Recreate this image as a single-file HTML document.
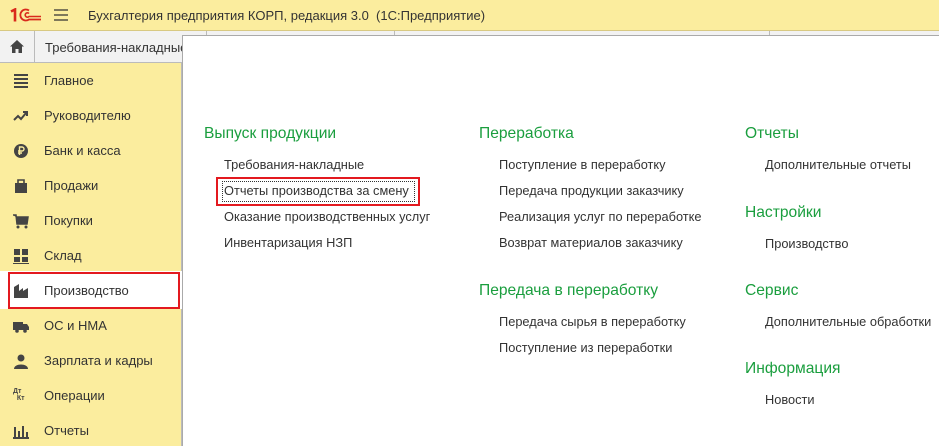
<!DOCTYPE html>
<html><head><meta charset="utf-8"><style>
*{margin:0;padding:0;box-sizing:border-box}
body{width:939px;height:446px;overflow:hidden;position:relative;font-family:"Liberation Sans",Arial,sans-serif;background:#fbed9e;color:#333}
.a{position:absolute;white-space:nowrap}
.top{left:0;top:0;width:939px;height:31px;background:#fbed9e;border-bottom:1px solid #d8c982}
.tabs{left:0;top:31px;width:939px;height:32px;background:#f2f2f2;border-bottom:1px solid #bbb}
.side{left:0;top:63px;width:182px;height:383px;background:#fbed9e;border-right:1px solid #bbb}
.panel{left:182px;top:35px;width:757px;height:411px;background:#fff;border-top:1px solid #aaa;border-left:1px solid #aaa}
.si{left:44px;font-size:13px;line-height:16px}
.ic{left:13px;width:16px;height:16px}
.h{font-size:15.6px;color:#1a9e3e;line-height:20px}
.it{font-size:12.8px;line-height:16px;color:#333}
</style></head><body>
<div class="a top"></div>
<svg class="a" style="left:10px;top:8px" width="31" height="14" viewBox="0 0 31 14"><path d="M1 3.5 L5 1.5 V13.5" stroke="#d92a1c" stroke-width="2.6" fill="none"/><path d="M19 2.5 A5.5 5.5 0 1 0 19 11.5 H31" stroke="#d92a1c" stroke-width="1.8" fill="none"/><path d="M19 5.5 A2.2 2.2 0 1 0 19 8.5 H31" stroke="#d92a1c" stroke-width="1.6" fill="none"/></svg>
<svg class="a" style="left:54px;top:9px" width="14" height="12"><path d="M0 1H14M0 6H14M0 11H14" stroke="#333" stroke-width="1.3"/></svg>
<div class="a" style="left:88px;top:8px;font-size:13px;color:#333">Бухгалтерия предприятия КОРП, редакция 3.0&nbsp; (1С:Предприятие)</div>
<div class="a tabs"></div>
<div class="a" style="left:34px;top:31px;width:1px;height:32px;background:#bbb"></div>
<div class="a" style="left:206px;top:31px;width:1px;height:5px;background:#bbb"></div>
<div class="a" style="left:394px;top:31px;width:1px;height:5px;background:#bbb"></div>
<div class="a" style="left:769px;top:31px;width:1px;height:5px;background:#bbb"></div>
<svg class="a" style="left:10px;top:40px" width="14" height="13" viewBox="0 0 14 13"><path d="M7 0 L14 6.5 H12 V13 H8.5 V9 H5.5 V13 H2 V6.5 H0 Z" fill="#444"/></svg>
<div class="a" style="left:45px;top:40px;font-size:13px">Требования-накладные</div>
<div class="a side"></div>
<div class="a" style="left:0;top:271px;width:182px;height:38px;background:#fff"></div>
<div class="a" style="left:8px;top:272px;width:172px;height:37px;border:2px solid #e3191f"></div>
<svg class="a ic" style="top:73px" viewBox="0 0 16 16"><path d="M1 2H15M1 6H15M1 10H15M1 14H15" stroke="#444" stroke-width="2"/></svg>
<svg class="a ic" style="top:108px" viewBox="0 0 16 16"><path d="M1 12 L5 8 L8 11 L13 5 M10 4H14V8" stroke="#444" stroke-width="2" fill="none"/></svg>
<svg class="a ic" style="top:143px" viewBox="0 0 16 16"><circle cx="8" cy="8" r="7" fill="#444"/><path d="M6.5 12V4H9a2 2 0 0 1 0 4H5M5 10H9" stroke="#fbed9e" stroke-width="1.4" fill="none"/></svg>
<svg class="a ic" style="top:178px" viewBox="0 0 16 16"><path d="M2 5H14V15H2Z" fill="#444"/><path d="M5 6V2H11V6" stroke="#444" stroke-width="1.6" fill="none"/></svg>
<svg class="a ic" style="top:213px" viewBox="0 0 16 16"><path d="M0 2H3L4 11H14L15 4H3" fill="#444" stroke="#444" stroke-width="1.5"/><circle cx="5" cy="14" r="1.5" fill="#444"/><circle cx="13" cy="14" r="1.5" fill="#444"/></svg>
<svg class="a ic" style="top:248px" viewBox="0 0 16 16"><path d="M1 1H7V7H1ZM9 1H15V7H9ZM1 9H7V14H1ZM9 9H15V14H9Z" fill="#444"/><path d="M0 15.5H16" stroke="#444"/></svg>
<svg class="a ic" style="top:283px" viewBox="0 0 16 16"><path d="M1 15V4L6 1V8L10 5V8L15 5V15Z" fill="#444"/></svg>
<svg class="a ic" style="top:318px" viewBox="0 0 16 16"><path d="M0 4H10V12H0ZM10 6H14L16 9V12H10Z" fill="#444"/><circle cx="4" cy="13" r="1.8" fill="#444"/><circle cx="12" cy="13" r="1.8" fill="#444"/></svg>
<svg class="a ic" style="top:353px" viewBox="0 0 16 16"><circle cx="8" cy="5" r="3.5" fill="#444"/><path d="M1 16C1 10 15 10 15 16Z" fill="#444"/></svg>
<div class="a" style="left:13px;top:388px;font-size:7px;font-weight:bold;line-height:7px;color:#444">Дт<br>&nbsp;&nbsp;Кт</div>
<svg class="a ic" style="top:423px" viewBox="0 0 16 16"><path d="M2 14V4M6 14V8M10 14V3M14 14V9M0 15H16" stroke="#444" stroke-width="2"/></svg>
<div class="a si" style="top:73px">Главное</div>
<div class="a si" style="top:108px">Руководителю</div>
<div class="a si" style="top:143px">Банк и касса</div>
<div class="a si" style="top:178px">Продажи</div>
<div class="a si" style="top:213px">Покупки</div>
<div class="a si" style="top:248px">Склад</div>
<div class="a si" style="top:283px">Производство</div>
<div class="a si" style="top:318px">ОС и НМА</div>
<div class="a si" style="top:353px">Зарплата и кадры</div>
<div class="a si" style="top:388px">Операции</div>
<div class="a si" style="top:423px">Отчеты</div>
<div class="a panel"></div>
<div class="a h" style="left:204px;top:124px">Выпуск продукции</div>
<div class="a it" style="left:224px;top:157px">Требования-накладные</div>
<div class="a it" style="left:224px;top:183px">Отчеты производства за смену</div>
<div class="a" style="left:216px;top:177px;width:204px;height:29px;border:2px solid #e3191f"></div>
<div class="a" style="left:222px;top:181px;width:193px;height:21px;border:1px dotted #333"></div>
<div class="a it" style="left:224px;top:209px">Оказание производственных услуг</div>
<div class="a it" style="left:224px;top:235px">Инвентаризация НЗП</div>
<div class="a h" style="left:479px;top:124px">Переработка</div>
<div class="a it" style="left:499px;top:157px">Поступление в переработку</div>
<div class="a it" style="left:499px;top:183px">Передача продукции заказчику</div>
<div class="a it" style="left:499px;top:209px">Реализация услуг по переработке</div>
<div class="a it" style="left:499px;top:235px">Возврат материалов заказчику</div>
<div class="a h" style="left:479px;top:281px">Передача в переработку</div>
<div class="a it" style="left:499px;top:314px">Передача сырья в переработку</div>
<div class="a it" style="left:499px;top:340px">Поступление из переработки</div>
<div class="a h" style="left:745px;top:124px">Отчеты</div>
<div class="a it" style="left:765px;top:157px">Дополнительные отчеты</div>
<div class="a h" style="left:745px;top:203px">Настройки</div>
<div class="a it" style="left:765px;top:236px">Производство</div>
<div class="a h" style="left:745px;top:281px">Сервис</div>
<div class="a it" style="left:765px;top:314px">Дополнительные обработки</div>
<div class="a h" style="left:745px;top:359px">Информация</div>
<div class="a it" style="left:765px;top:392px">Новости</div>
</body></html>
